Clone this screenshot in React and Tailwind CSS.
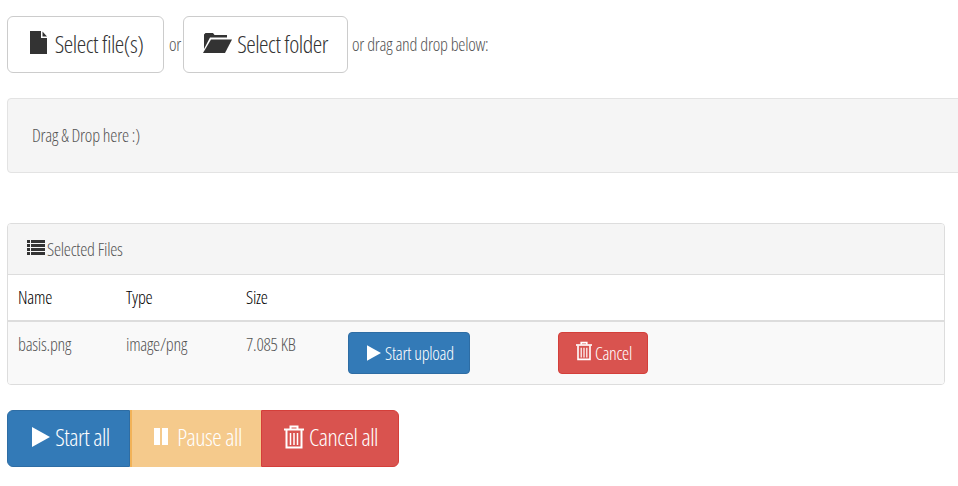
import React from 'react';

const font = "font-['Open_Sans',sans-serif] font-light [font-stretch:75%]";

function FileIcon({ className }) {
  return (
    <svg viewBox="0 0 17 23" className={className} fill="currentColor">
      <path d="M0 0h11v7h6v16H0z" />
      <path d="M12.500 0.500 17 5.500h-4.500z" />
    </svg>
  );
}

function FolderIcon({ className }) {
  return (
    <svg viewBox="0 0 29 21" className={className} fill="currentColor">
      <path d="M1 2.500 2.500 1H10l1.500 2H24v2.500H7L1 17z" />
      <path d="M8 7.500h21L22 21H0z" />
    </svg>
  );
}

function ListIcon({ className }) {
  return (
    <svg viewBox="0 0 18 15" className={className} fill="currentColor">
      <path d="M0 0h3v3H0zM4 0h14v3H4zM0 4h3v3H0zM4 4h14v3H4zM0 8h3v3H0zM4 8h14v3H4zM0 12h3v3H0zM4 12h14v3H4z" />
    </svg>
  );
}

function PlayIcon({ className }) {
  return (
    <svg viewBox="0 0 18 20" className={className} fill="currentColor">
      <path d="M0 0 18 10 0 20z" />
    </svg>
  );
}

function PauseIcon({ className }) {
  return (
    <svg viewBox="0 0 14 17" className={className} fill="currentColor">
      <path d="M0 0h6v17H0zM8 0h6v17H8z" />
    </svg>
  );
}

function TrashIcon({ className }) {
  return (
    <svg viewBox="0 0 20 24" className={className} fill="none" stroke="currentColor" strokeWidth="2">
      <path d="M0 4.500h20" />
      <path d="M6.500 4V1.500h7V4" />
      <path d="M2.500 5v17.500h15V5" />
      <path d="M6.500 8v12M10 8v12M13.500 8v12" strokeWidth="1.500" />
    </svg>
  );
}

export default function App() {
  return (
    <div className={`${font} w-[958px] h-[486px] overflow-hidden bg-white pl-[7px] pt-4 text-[#333] text-[18px] tracking-[-0.25px]`}>
      <div className="flex items-start">
        <button className="flex items-center justify-center w-[157px] h-[57px] pl-[2px] pb-[2px] bg-white border border-[#ccc] rounded-md text-[24px] tracking-[-0.5px]">
          <FileIcon className="w-[17px] h-[23px] mr-2 -mt-[2px]" />
          Select file(s)
        </button>
        <span className="ml-[5px] mr-[2px] mt-[15px] text-[#555]">or</span>
        <button className="flex items-center justify-center w-[165px] h-[57px] pb-[2px] bg-white border border-[#ccc] rounded-md text-[24px] tracking-[-0.5px]">
          <FolderIcon className="w-[29px] h-[21px] mr-[5px] -mt-[2px]" />
          Select folder
        </button>
        <span className="ml-[4px] mt-[15px] text-[#555]">or drag and drop below:</span>
      </div>

      <div className="w-[960px] h-[75px] mt-[25px] bg-[#f5f5f5] border border-[#e3e3e3] rounded pl-6 flex items-center text-[#555]">
        Drag &amp; Drop here :)
      </div>

      <div className="w-[938px] h-[162px] mt-[50px] border border-[#ddd] rounded bg-white overflow-hidden">
        <div className="h-[51px] bg-[#f5f5f5] border-b border-[#ddd] flex items-center pl-[19px] text-[#555]">
          <ListIcon className="w-[18px] h-[15px] text-[#333] mr-[2px] -mt-1" />
          Selected Files
        </div>
        <table className="w-full border-collapse">
          <thead>
            <tr className="h-[46px] border-b-2 border-[#ddd] text-black tracking-[-0.25px]">
              <th className="w-[108px] pl-2.5 text-left font-light">Name</th>
              <th className="w-[120px] pl-2.5 text-left font-light">Type</th>
              <th className="w-[102px] pl-2.5 text-left font-light">Size</th>
              <th className="w-[210px]"></th>
              <th></th>
            </tr>
          </thead>
          <tbody>
            <tr className="h-[63px] bg-[#f9f9f9] text-[#555] align-top">
              <td className="pl-2.5 pt-[9px]">basis.png</td>
              <td className="pl-2.5 pt-[9px]">image/png</td>
              <td className="pl-2.5 pt-[9px]">7.085 KB</td>
              <td className="pl-2.5 pt-2.5">
                <button className="flex items-center justify-center w-[122px] h-[42px] pl-[3px] bg-[#337ab7] border border-[#2e6da4] rounded text-white">
                  <PlayIcon className="w-[14px] h-[16px] mr-[4px] -mt-px" />
                  Start upload
                </button>
              </td>
              <td className="pl-2.5 pt-2.5">
                <button className="flex items-center justify-center w-[90px] h-[42px] pl-[2px] bg-[#d9534f] border border-[#d43f3a] rounded text-white">
                  <TrashIcon className="w-[16px] h-[20px] mr-[3px] -mt-1" />
                  Cancel
                </button>
              </td>
            </tr>
          </tbody>
        </table>
      </div>

      <div className="flex mt-[25px] text-[24px] tracking-[-0.5px] text-white">
        <button className="flex items-center justify-center w-[123px] h-[57px] pb-1 pl-[5px] bg-[#337ab7] border border-[#2e6da4] rounded-l-md">
          <PlayIcon className="w-[18px] h-[20px] mr-[5px]" />
          Start all
        </button>
        <button className="flex items-center justify-center w-[131px] h-[57px] pb-1 pl-[3px] bg-[#f5ca8c] border-l-2 border-l-[#eea236]/60">
          <PauseIcon className="w-[14px] h-[17px] mr-[9px]" />
          Pause all
        </button>
        <button className="flex items-center justify-center w-[138px] h-[57px] pb-1 pl-[2px] bg-[#d9534f] border border-[#d43f3a] rounded-r-md">
          <TrashIcon className="w-[20px] h-[24px] mr-[5px]" />
          Cancel all
        </button>
      </div>
    </div>
  );
}
